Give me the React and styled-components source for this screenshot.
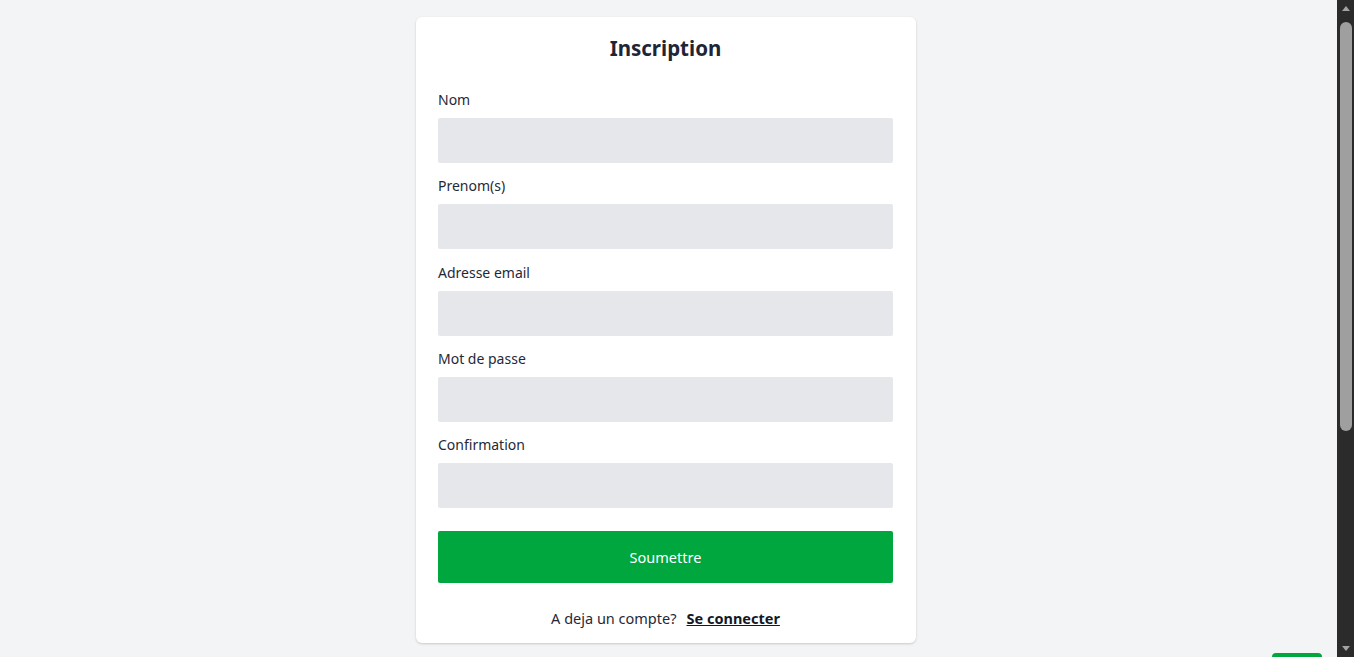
import React from "react";
import styled, { createGlobalStyle } from "styled-components";

const GlobalStyle = createGlobalStyle`
  html, body {
    margin: 0;
    height: 100%;
    overflow: hidden;
  }
  body {
    background: #f3f4f6;
    font-family: "Noto Sans", "Open Sans", sans-serif;
    color: #1f2937;
  }
`;

const Window = styled.div`
  display: flex;
  height: 100vh;
`;

const Page = styled.main`
  position: relative;
  flex: 1;
  overflow: hidden;
  display: flex;
  justify-content: center;
  align-items: flex-start;
  padding: 17px 5px 0 0;
`;

const Card = styled.form`
  width: 500px;
  box-sizing: border-box;
  background: #fff;
  border-radius: 6px;
  box-shadow: 0 1px 3px rgba(0, 0, 0, 0.12), 0 1px 2px rgba(0, 0, 0, 0.06);
  padding: 16px 23px 13px 22px;
  display: flex;
  flex-direction: column;
`;

const Title = styled.h1`
  margin: 0 0 25px;
  font-size: 20.5px;
  line-height: 30px;
  font-weight: 700;
  text-align: center;
  color: #1e2536;
`;

const Field = styled.div`
  display: flex;
  flex-direction: column;
  margin-bottom: 11.25px;
`;

const Label = styled.label`
  font-size: 14px;
  line-height: 24px;
  margin-bottom: 6px;
  color: #1f2937;
`;

const Input = styled.input`
  height: 45px;
  border: none;
  border-radius: 2px;
  background: #e5e7eb;
  padding: 0 12px;
  font: inherit;
  outline: none;
`;

const Submit = styled.button`
  margin-top: 12px;
  height: 52px;
  border: none;
  border-radius: 2px;
  background: #00a63e;
  color: #fff;
  font: inherit;
  font-size: 14.5px;
  cursor: pointer;
`;

const Footer = styled.p`
  margin: 23px 0 0;
  text-align: center;
  font-size: 14.5px;
  line-height: 24px;
  color: #1f2937;
`;

const Link = styled.a`
  margin-left: 10px;
  font-weight: 700;
  color: #111827;
  text-decoration: underline;
`;

const Fab = styled.div`
  position: absolute;
  top: 653px;
  right: 15px;
  width: 50px;
  height: 40px;
  border-radius: 4px;
  background: #00a63e;
`;

const ScrollBar = styled.div`
  width: 17px;
  flex: none;
  background: #2b2b2b;
  display: flex;
  flex-direction: column;
  align-items: center;
`;

const Arrow = styled.div`
  height: 17px;
  display: flex;
  align-items: center;
  justify-content: center;
  padding-left: 1px;
  &::before {
    content: "";
    border-left: 4.5px solid transparent;
    border-right: 4.5px solid transparent;
    ${({ down }) =>
      down ? "border-top: 5px solid #a3a3a3;" : "border-bottom: 5px solid #a3a3a3;"}
  }
`;

const Track = styled.div`
  flex: 1;
  width: 100%;
  padding: 5px 2px 0 3px;
  box-sizing: border-box;
`;

const Thumb = styled.div`
  height: 409px;
  border-radius: 6px;
  background: #9f9f9f;
`;

const fields = ["Nom", "Prenom(s)", "Adresse email", "Mot de passe", "Confirmation"];

export default function App() {
  return (
    <>
      <GlobalStyle />
      <Window>
        <Page>
          <Card onSubmit={e => e.preventDefault()}>
            <Title>Inscription</Title>
            {fields.map(f => (
              <Field key={f}>
                <Label>{f}</Label>
                <Input type={f.startsWith("Mot") || f === "Confirmation" ? "password" : "text"} />
              </Field>
            ))}
            <Submit type="submit">Soumettre</Submit>
            <Footer>
              A deja un compte?
              <Link href="#">Se connecter</Link>
            </Footer>
          </Card>
          <Fab />
        </Page>
        <ScrollBar>
          <Arrow />
          <Track>
            <Thumb />
          </Track>
          <Arrow down />
        </ScrollBar>
      </Window>
    </>
  );
}
